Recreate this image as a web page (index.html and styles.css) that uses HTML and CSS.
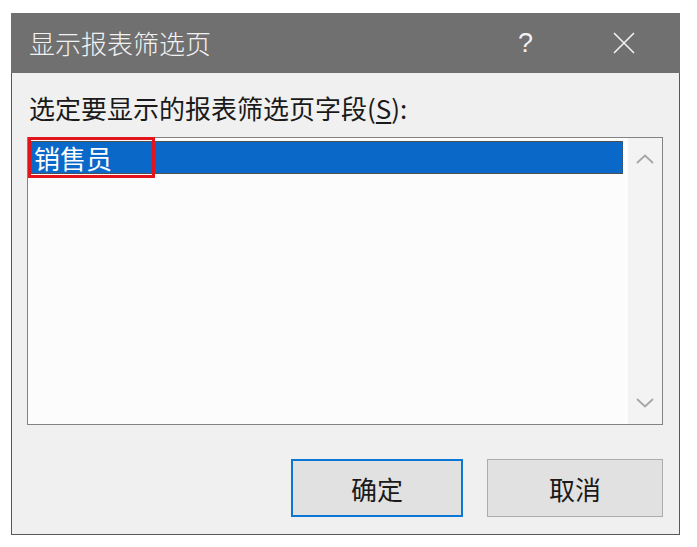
FILE: index.html
```html
<!DOCTYPE html>
<html lang="zh-CN">
<head>
<meta charset="utf-8">
<title>显示报表筛选页</title>
<link rel="stylesheet" href="styles.css">
</head>
<body>
<div class="dialog">
  <div class="titlebar">
    <span class="title">显示报表筛选页</span>
    <span class="help">?</span>
    <svg class="close" width="22" height="22" viewBox="0 0 22 22"><path d="M1 1 L21 21 M21 1 L1 21" stroke="#f2f2f2" stroke-width="1.6" fill="none"/></svg>
  </div>
  <div class="body">
    <div class="label">选定要显示的报表筛选页字段(<u>S</u>):</div>
    <div class="listbox">
      <div class="items">
        <div class="item selected">销售员</div>
      </div>
      <div class="scrollbar">
        <svg width="18" height="10" viewBox="0 0 18 10"><path d="M1 9 L9 1.5 L17 9" stroke="#a6a6a6" stroke-width="1.8" fill="none"/></svg>
        <svg width="18" height="10" viewBox="0 0 18 10"><path d="M1 1 L9 8.5 L17 1" stroke="#a6a6a6" stroke-width="1.8" fill="none"/></svg>
      </div>
      <div class="highlight-box"></div>
    </div>
    <div class="buttons">
      <button class="btn btn-default">确定</button>
      <button class="btn btn-cancel">取消</button>
    </div>
  </div>
</div>
</body>
</html>
```
FILE: styles.css
```css
html, body {
  margin: 0;
  padding: 0;
  background: #ffffff;
}
body {
  font-family: "Noto Sans CJK SC", "Noto Sans", sans-serif;
  color: #1a1a1a;
}
.dialog {
  width: 669px;
  margin: 13px 0 0 11px;
}
.titlebar {
  height: 60px;
  background: #707070;
  display: flex;
  align-items: center;
  padding-left: 18px;
  color: #f2f2f2;
  font-size: 26px;
  font-weight: 300;
}
.title {
  flex: 1;
  line-height: 30px;
}
.help {
  font-family: "Liberation Sans", sans-serif;
  font-size: 27px;
  line-height: 30px;
  margin-right: 80px;
}
.close {
  margin-right: 45px;
}
.body {
  background: #f0f0f0;
  border: 1px solid #585858;
  border-top: 0;
  padding: 19px 16px 17px 15px;
}
.label {
  font-size: 26px;
  line-height: 31px;
  height: 31px;
  padding-left: 2px;
  margin-bottom: 14px;
  white-space: nowrap;
}
.label u {
  text-underline-offset: 3px;
}
.listbox {
  position: relative;
  width: 636px;
  height: 288px;
  box-sizing: border-box;
  border: 1px solid #838383;
  background: #fcfcfd;
  display: flex;
}
.items {
  flex: 1;
  padding: 3px 5px 0 2px;
}
.item {
  height: 33px;
  box-sizing: border-box;
  font-size: 26px;
  line-height: 31px;
  padding-left: 3px;
}
.selected {
  background: #0a68c9;
  color: #ffffff;
  border: 1px dotted #4a4a4a;
}
.scrollbar {
  width: 34px;
  background: #f3f3f3;
  display: flex;
  flex-direction: column;
  justify-content: space-between;
  align-items: center;
  padding: 16px 0 16px;
  box-sizing: border-box;
}
.highlight-box {
  position: absolute;
  left: 0;
  top: -1px;
  width: 127px;
  height: 41px;
  box-sizing: border-box;
  border: 3px solid #e3151b;
}
.buttons {
  display: flex;
  justify-content: flex-start;
  gap: 24px;
  margin-top: 34px;
  padding-left: 264px;
}
.btn {
  height: 58px;
  font-family: "Noto Sans CJK SC", sans-serif;
  font-size: 26px;
  color: #1a1a1a;
  background: #e1e1e1;
  box-sizing: border-box;
  padding: 0;
}
.btn-default {
  width: 172px;
  border: 2px solid #0a78d4;
}
.btn-cancel {
  width: 176px;
  border: 1px solid #adadad;
}
```
